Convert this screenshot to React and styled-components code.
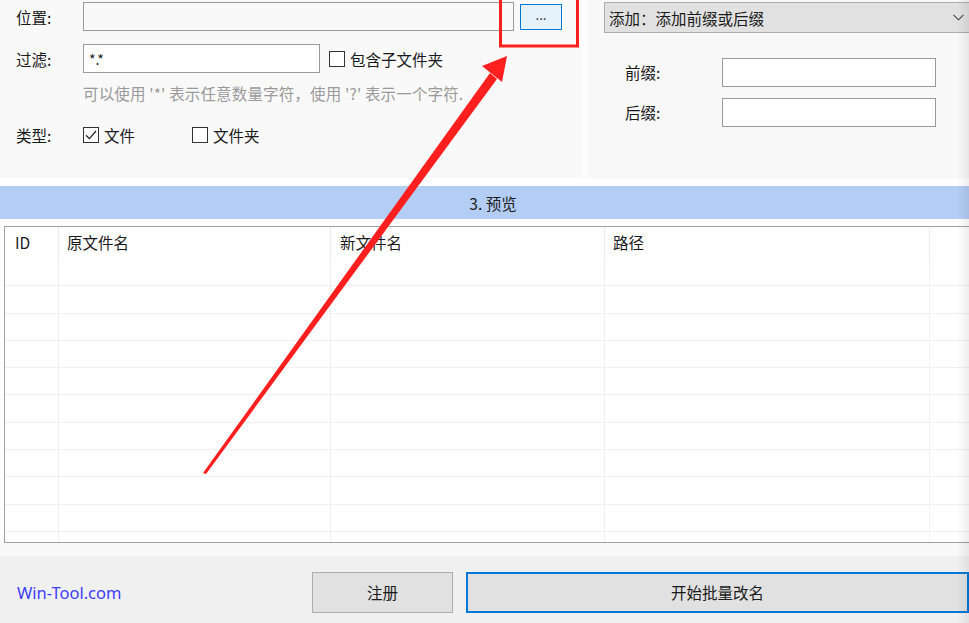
import React from 'react';
import styled, { createGlobalStyle } from 'styled-components';

const Global = createGlobalStyle`
  html, body { margin: 0; padding: 0; background: #ffffff; }
  body {
    font-family: "Noto Sans CJK SC", "Noto Sans", sans-serif;
    font-size: 15.5px;
    color: #1a1a1a;
    overflow: hidden;
  }
`;

const Page = styled.div`
  width: 969px;
  height: 623px;
  position: relative;
  overflow: hidden;
  display: flex;
  flex-direction: column;
  background: #ffffff;
  &::after {
    content: "";
    position: absolute;
    top: 0;
    right: 0;
    width: 12px;
    height: 100%;
    background: linear-gradient(to right, rgba(0,0,0,0), rgba(0,0,0,0.07));
    pointer-events: none;
  }
`;

const Top = styled.div`
  display: flex;
  height: 178px;
  gap: 6px;
  background: #fdfdfd;
`;

const LeftPanel = styled.div`
  width: 582px;
  flex-shrink: 0;
  background: #f9f9f9;
  padding: 2px 0 0 16px;
  box-sizing: border-box;
  display: flex;
  flex-direction: column;
`;

const RightPanel = styled.div`
  flex: 1;
  background: #f8f8f8;
  padding: 2px 0 0 16px;
  display: flex;
  flex-direction: column;
  overflow: hidden;
`;

const FormRow = styled.div`
  display: flex;
  align-items: center;
  margin-top: ${p => p.$top || 0}px;
`;

const Label = styled.span`
  width: ${p => p.$w || 67}px;
  flex-shrink: 0;
  line-height: 20px;
  margin-top: ${p => p.$lift ? -2 : 0}px;
`;

const TextBox = styled.div`
  width: ${p => p.$w}px;
  height: 29px;
  box-sizing: border-box;
  border: 1px solid #9a9a9a;
  background: ${p => (p.$muted ? '#f9f9f9' : '#ffffff')};
  padding: 0 5px;
  display: flex;
  align-items: center;
  font-size: 14px;
  flex-shrink: 0;
`;

const BrowseButton = styled.div`
  width: 42px;
  height: 26px;
  margin-left: 6px;
  box-sizing: border-box;
  border: 1px solid #0078d7;
  background: #e5f1fb;
  display: flex;
  align-items: center;
  justify-content: center;
  font-size: 13px;
  padding-bottom: 4px;
`;

const Check = styled.span`
  display: inline-flex;
  align-items: center;
  margin-left: ${p => p.$left || 0}px;
  gap: 5px;
  line-height: 20px;
`;

const Box = styled.span`
  width: 16px;
  height: 16px;
  box-sizing: border-box;
  border: 1px solid #333333;
  background: #ffffff;
  display: inline-flex;
  align-items: center;
  justify-content: center;
`;

const Hint = styled.div`
  margin: 11px 0 0 67px;
  line-height: 18px;
  font-size: 15.5px;
  letter-spacing: 0.15px;
  color: #9a9a9a;
  white-space: nowrap;
`;

const Select = styled.div`
  width: calc(100% + 8px);
  height: 31px;
  box-sizing: border-box;
  border: 1px solid #adadad;
  background: #e1e1e1;
  display: flex;
  align-items: center;
  justify-content: space-between;
  padding: 0 12px 0 4px;
  flex-shrink: 0;
`;

const AffixForm = styled.div`
  padding-left: 21px;
  margin-top: 25px;
  display: flex;
  flex-direction: column;
  gap: 11px;
`;

const SectionBar = styled.div`
  margin-top: 8px;
  height: 33px;
  background: #b4cdf4;
  display: flex;
  align-items: center;
  justify-content: center;
  padding-left: 17px;
  font-size: 15.5px;
`;

const Table = styled.div`
  margin: 7px -12px 0 4px;
  height: 317px;
  box-sizing: border-box;
  border: 1px solid #a0a0a0;
  background: #ffffff;
  overflow: hidden;
`;

const Row = styled.div`
  display: grid;
  grid-template-columns: 54px 272px 274px 325px 1fr;
  height: ${p => (p.$head ? '32px' : '27.3px')};
  box-sizing: border-box;
  border-bottom: ${p => (p.$head ? 'none' : '1px solid #f0f0f0')};
`;

const Cell = styled.div`
  border-right: 1px solid ${p => (p.$head ? '#ececec' : '#f0f0f0')};
  padding-left: ${p => p.$pad || 8}px;
  display: flex;
  align-items: center;
  font-size: 15.5px;
  ${p => p.$head && 'padding-bottom: 2px;'}
  &:last-child { border-right: none; }
`;

const Strip = styled.div`
  height: 13px;
  background: #f9f9f9;
`;

const Footer = styled.div`
  flex: 1;
  background: #f0f0f0;
  display: flex;
  align-items: flex-start;
  padding: 16px 0 0 17px;
`;

const SiteLink = styled.span`
  font-family: "Noto Sans", "Open Sans", sans-serif;
  font-size: 16.5px;
  color: #3d3dff;
  width: 295px;
  line-height: 41px;
  flex-shrink: 0;
`;

const Button = styled.div`
  height: 41px;
  box-sizing: border-box;
  width: ${p => p.$w};
  margin-left: ${p => p.$left || 0}px;
  border: ${p => (p.$primary ? '2px solid #0078d7' : '1px solid #adadad')};
  background: #e1e1e1;
  display: flex;
  align-items: center;
  justify-content: center;
  padding-bottom: 2px;
  flex-shrink: 0;
`;

const Annotation = styled.svg`
  position: absolute;
  left: 0;
  top: 0;
  pointer-events: none;
`;

const Tick = () => (
  <svg width="14" height="14" viewBox="0 0 14 14">
    <path d="M2 7.2 L5.4 10.6 L12 3" fill="none" stroke="#222" strokeWidth="1.3" />
  </svg>
);

const columns = [
  { t: 'ID', pad: 10 },
  { t: '原文件名', pad: 8 },
  { t: '新文件名', pad: 9 },
  { t: '路径', pad: 8 },
  { t: '', pad: 8 },
];

export default function App() {
  const rows = Array.from({ length: 11 });
  return (
    <Page>
      <Global />
      <Top>
        <LeftPanel>
          <FormRow>
            <Label>位置:</Label>
            <TextBox $w={431} $muted />
            <BrowseButton>...</BrowseButton>
          </FormRow>
          <FormRow $top={13}>
            <Label>过滤:</Label>
            <TextBox $w={237}>*.*</TextBox>
            <Check $left={9}>
              <Box />
              包含子文件夹
            </Check>
          </FormRow>
          <Hint>可以使用 '*' 表示任意数量字符，使用 '?' 表示一个字符.</Hint>
          <FormRow $top={23}>
            <Label>类型:</Label>
            <Check>
              <Box>
                <Tick />
              </Box>
              文件
            </Check>
            <Check $left={57}>
              <Box />
              文件夹
            </Check>
          </FormRow>
        </LeftPanel>
        <RightPanel>
          <Select>
            <span>添加：添加前缀或后缀</span>
            <svg width="11" height="7" viewBox="0 0 11 7">
              <path d="M0.5 0.8 L5.5 5.8 L10.5 0.8" fill="none" stroke="#444" strokeWidth="1.1" />
            </svg>
          </Select>
          <AffixForm>
            <FormRow>
              <Label $w={97} $lift>前缀:</Label>
              <TextBox $w={214} />
            </FormRow>
            <FormRow>
              <Label $w={97} $lift>后缀:</Label>
              <TextBox $w={214} />
            </FormRow>
          </AffixForm>
        </RightPanel>
      </Top>

      <SectionBar>3. 预览</SectionBar>

      <Table>
        <Row $head>
          {columns.map((c, i) => (
            <Cell key={i} $head $pad={c.pad}>{c.t}</Cell>
          ))}
        </Row>
        {rows.map((_, r) => (
          <Row key={r}>
            {columns.map((c, i) => (
              <Cell key={i} />
            ))}
          </Row>
        ))}
      </Table>

      <Strip />

      <Footer>
        <SiteLink>Win-Tool.com</SiteLink>
        <Button $w="141px">注册</Button>
        <Button $w="503px" $left={13} $primary>开始批量改名</Button>
      </Footer>

      <Annotation width="969" height="623" viewBox="0 0 969 623">
        <rect x="500.5" y="-4" width="77" height="50" fill="none" stroke="#ff1f1f" strokeWidth="3" />
        <polygon points="203,473 206,474 497,79 490,73" fill="#ff1f1f" />
        <polygon points="507,56 482,66 502,82" fill="#ff1f1f" />
      </Annotation>
    </Page>
  );
}
